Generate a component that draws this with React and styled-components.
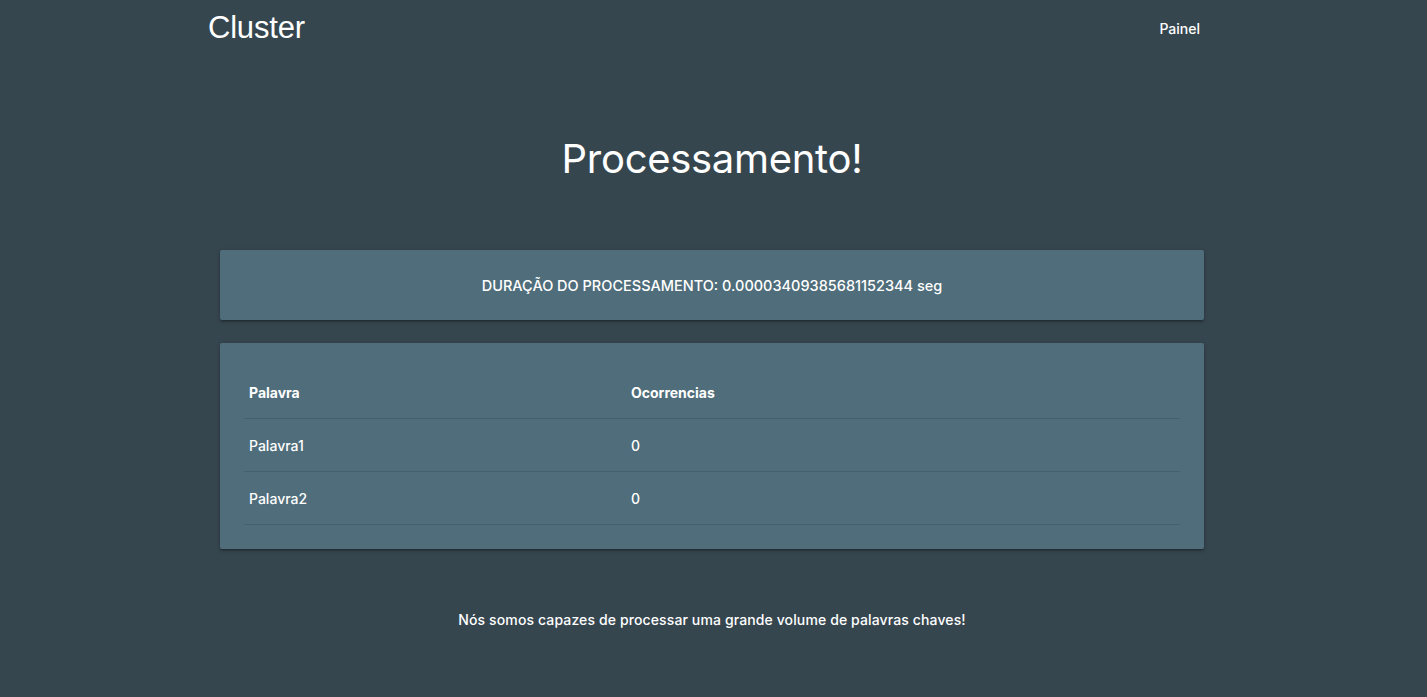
import React from 'react';
import styled, { createGlobalStyle } from 'styled-components';

const GlobalStyle = createGlobalStyle`
  html, body {
    margin: 0;
    padding: 0;
    background: #36464f;
    color: #ffffff;
    font-family: Inter, "Liberation Sans", sans-serif;
    -webkit-font-smoothing: antialiased;
  }
`;

const Nav = styled.nav`
  height: 56px;
`;

const NavInner = styled.div`
  width: 992px;
  height: 100%;
  margin-left: calc(50% - 505.5px);
  display: flex;
  align-items: center;
  justify-content: space-between;
`;

const Brand = styled.a`
  font-family: "Liberation Sans", Arial, sans-serif;
  font-size: 31px;
  color: #ffffff;
  text-decoration: none;
  letter-spacing: -0.2px;
`;

const NavLink = styled.a`
  font-size: 14px;
  font-weight: 500;
  color: #ffffff;
  text-decoration: none;
`;

const Main = styled.main`
  width: 984px;
  margin-left: calc(50% - 493.5px);
`;

const Title = styled.h1`
  margin: 76px 0 64px;
  text-align: center;
  font-size: 40px;
  font-weight: 400;
  line-height: 54px;
  letter-spacing: -0.3px;
`;

const Card = styled.section`
  background: #4f6d7a;
  border-radius: 2px;
  box-shadow: 0 2px 2px 0 rgba(0, 0, 0, 0.14), 0 3px 1px -2px rgba(0, 0, 0, 0.12),
    0 1px 5px 0 rgba(0, 0, 0, 0.2);
  padding: 24px;
  margin-bottom: 23px;
  text-align: ${(p) => (p.$center ? 'center' : 'left')};
`;

const Duration = styled.p`
  margin: 0;
  font-size: 14.5px;
  font-weight: 500;
  line-height: 24px;
  padding-bottom: 0;
  margin-bottom: -2px;
`;

const Table = styled.table`
  width: 100%;
  border-collapse: collapse;
  font-size: 14px;
`;

const Row = styled.tr`
  border-bottom: 1px solid rgba(0, 0, 0, 0.12);
`;

const HeadCell = styled.th`
  padding: 15px 5px;
  height: 21px;
  text-align: left;
  font-weight: 700;
  width: ${(p) => p.$width || 'auto'};
`;

const Cell = styled.td`
  padding: 15px 5px;
  height: 22px;
  font-weight: 500;
`;

const Footer = styled.p`
  margin: 62px 0 0;
  text-align: center;
  font-size: 14px;
  font-weight: 500;
  letter-spacing: 0.12px;
`;

const words = [
  { id: 1, word: 'Palavra1', count: 0 },
  { id: 2, word: 'Palavra2', count: 0 },
];

export default function App() {
  return (
    <>
      <GlobalStyle />
      <Nav>
        <NavInner>
          <Brand href="#">Cluster</Brand>
          <NavLink href="#">Painel</NavLink>
        </NavInner>
      </Nav>
      <Main>
        <Title>Processamento!</Title>
        <Card $center>
          <Duration>DURAÇÃO DO PROCESSAMENTO: 0.00003409385681152344 seg</Duration>
        </Card>
        <Card>
          <Table>
            <thead>
              <Row>
                <HeadCell $width="372px">Palavra</HeadCell>
                <HeadCell>Ocorrencias</HeadCell>
              </Row>
            </thead>
            <tbody>
              {words.map((w) => (
                <Row key={w.id}>
                  <Cell>{w.word}</Cell>
                  <Cell>{w.count}</Cell>
                </Row>
              ))}
            </tbody>
          </Table>
        </Card>
        <Footer>Nós somos capazes de processar uma grande volume de palavras chaves!</Footer>
      </Main>
    </>
  );
}
